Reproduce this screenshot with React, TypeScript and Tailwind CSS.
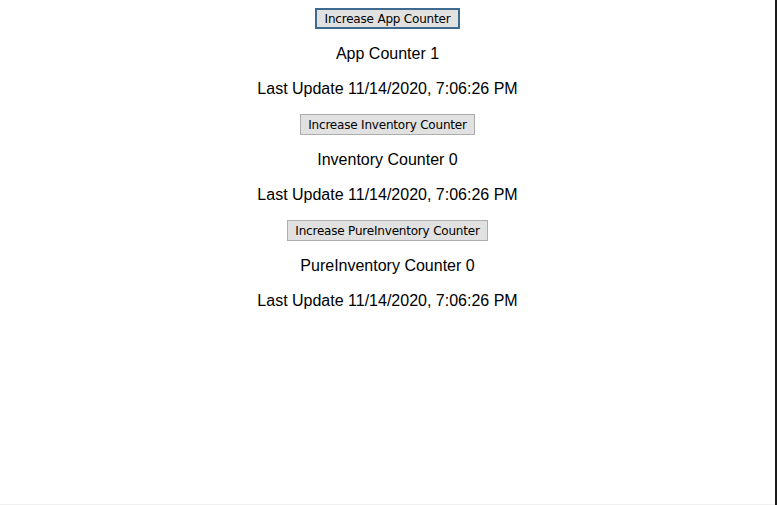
import { useState } from 'react';

const stamp = '11/14/2020, 7:06:26 PM';

function CounterBlock({
    label,
    count,
    btnWidth,
    focused,
    onClick,
}: {
    label: string;
    count: number;
    btnWidth: string;
    focused?: boolean;
    onClick: () => void;
}) {
    return (
        <div className="flex flex-col items-center">
            <button
                onClick={onClick}
                className={`${btnWidth} h-[21px] flex items-center justify-center bg-[#e1e1e1] text-[12px] leading-none text-black font-['DejaVu_Sans',sans-serif] tracking-[-0.2px] ${
                    focused ? 'border-2 border-[#3e6a8f]' : 'border border-[#adadad]'
                }`}
            >
                Increase {label} Counter
            </button>
            <p className="mt-4 h-[18.5px] leading-[18.5px] text-[16px]">
                {label} Counter {count}
            </p>
            <p className="mt-4 mb-4 h-[18.5px] leading-[18.5px] text-[16px]">Last Update {stamp}</p>
        </div>
    );
}

export default function App() {
    const [app, setApp] = useState(1);
    const [inv, setInv] = useState(0);
    const [pure, setPure] = useState(0);

    return (
        <div className="h-[505px] w-[777px] bg-white flex">
            <div className="flex-1 flex flex-col border-b border-[#f0f0f0]">
                <div className="pt-2 flex flex-col items-center font-['Liberation_Sans',Arial,sans-serif] text-black">
                    <CounterBlock label="App" count={app} btnWidth="w-[145px]" focused onClick={() => setApp(app + 1)} />
                    <CounterBlock label="Inventory" count={inv} btnWidth="w-[175px]" onClick={() => setInv(inv + 1)} />
                    <CounterBlock label="PureInventory" count={pure} btnWidth="w-[201px]" onClick={() => setPure(pure + 1)} />
                </div>
            </div>
            <div className="w-[2px] bg-[#1a1a1a]" />
        </div>
    );
}
